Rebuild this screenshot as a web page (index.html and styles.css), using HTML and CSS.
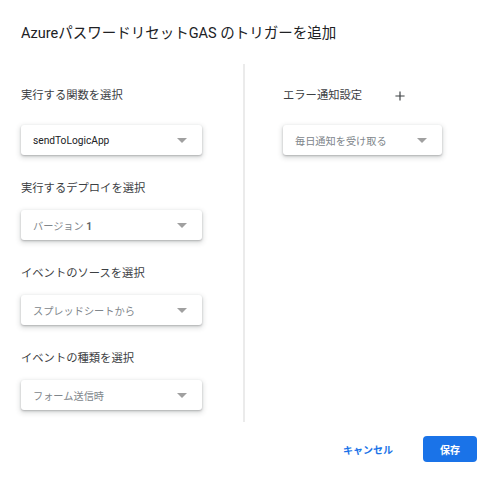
FILE: index.html
```html
<!DOCTYPE html>
<html lang="ja">
<head>
    <meta charset="UTF-8">
    <meta name="viewport" content="width=device-width, initial-scale=1.0">
    <title>トリガーを追加</title>
    <link rel="stylesheet" href="styles.css">
</head>
<body>
    <div class="dialog">
        <h1 class="dialog-title">AzureパスワードリセットGAS のトリガーを追加</h1>

        <div class="columns">
            <div class="col col-left">
                <div class="field">
                    <div class="field-label">実行する関数を選択</div>
                    <div class="select">
                        <span class="select-value filled">sendToLogicApp</span>
                        <span class="select-arrow"></span>
                    </div>
                </div>
                <div class="field">
                    <div class="field-label">実行するデプロイを選択</div>
                    <div class="select">
                        <span class="select-value">バージョン <b>1</b></span>
                        <span class="select-arrow"></span>
                    </div>
                </div>
                <div class="field">
                    <div class="field-label">イベントのソースを選択</div>
                    <div class="select">
                        <span class="select-value">スプレッドシートから</span>
                        <span class="select-arrow"></span>
                    </div>
                </div>
                <div class="field">
                    <div class="field-label">イベントの種類を選択</div>
                    <div class="select">
                        <span class="select-value">フォーム送信時</span>
                        <span class="select-arrow"></span>
                    </div>
                </div>
            </div>

            <div class="col col-right">
                <div class="field">
                    <div class="field-label">
                        エラー通知設定
                        <svg class="plus" viewBox="0 0 12 12" xmlns="http://www.w3.org/2000/svg">
                            <path d="M6 0.5 V11.5 M0.5 6 H11.5" stroke="#3c4043" stroke-width="1.4" fill="none" />
                        </svg>
                    </div>
                    <div class="select select-narrow">
                        <span class="select-value">毎日通知を受け取る</span>
                        <span class="select-arrow"></span>
                    </div>
                </div>
            </div>
        </div>

        <div class="dialog-actions">
            <button class="btn btn-text">キャンセル</button>
            <button class="btn btn-primary">保存</button>
        </div>
    </div>
</body>
</html>
```

FILE: styles.css
```css
body {
    margin: 0;
    background-color: #ffffff;
    font-family: 'Roboto', 'Noto Sans CJK JP', sans-serif;
    color: #202124;
}

.dialog {
    padding: 24px 23px 0 21px;
}

.dialog-title {
    margin: 0;
    font-size: 14.5px;
    font-weight: 400;
    line-height: 20px;
    color: #202124;
}

.columns {
    display: flex;
    margin-top: 20px;
}

.col {
    padding-top: 24px;
}

.col-left {
    width: 222px;
    height: 334px;
    border-right: 2px solid #ebebeb;
}

.col-right {
    padding-left: 38px;
}

.field + .field {
    margin-top: 26px;
}

.field-label {
    display: flex;
    align-items: center;
    height: 16px;
    font-size: 11.3px;
    line-height: 16px;
    color: #3c4043;
}

.field:first-child .field-label {
    margin-bottom: 21px;
}

.field-label {
    margin-bottom: 13px;
}

.plus {
    width: 10px;
    height: 10px;
    margin-left: 33px;
}

.select {
    display: flex;
    align-items: center;
    justify-content: space-between;
    box-sizing: border-box;
    width: 181px;
    height: 30px;
    padding: 0 15px 0 12px;
    background-color: #ffffff;
    border-radius: 3px;
    box-shadow: 0 1px 2px rgba(60, 64, 67, 0.3), 0 2px 5px 1px rgba(60, 64, 67, 0.18);
}

.select-narrow {
    width: 159px;
}

.select-value {
    font-size: 10.2px;
    color: #80868b;
}

.select-value b {
    color: #5f6368;
}

.select-value.filled {
    color: #202124;
}

.select-arrow {
    width: 0;
    height: 0;
    border-left: 5px solid transparent;
    border-right: 5px solid transparent;
    border-top: 5px solid #a0a0a0;
}

.dialog-actions {
    display: flex;
    justify-content: flex-end;
    align-items: center;
    gap: 30px;
    margin-top: 14px;
}

.btn {
    font-family: 'Roboto', 'Noto Sans CJK JP', sans-serif;
    font-size: 10px;
    font-weight: 700;
    border: none;
    cursor: pointer;
}

.btn-text {
    padding: 0;
    background: none;
    color: #1a73e8;
}

.btn-primary {
    width: 54px;
    height: 26px;
    background-color: #1a73e8;
    color: #ffffff;
    border-radius: 4px;
}
```
